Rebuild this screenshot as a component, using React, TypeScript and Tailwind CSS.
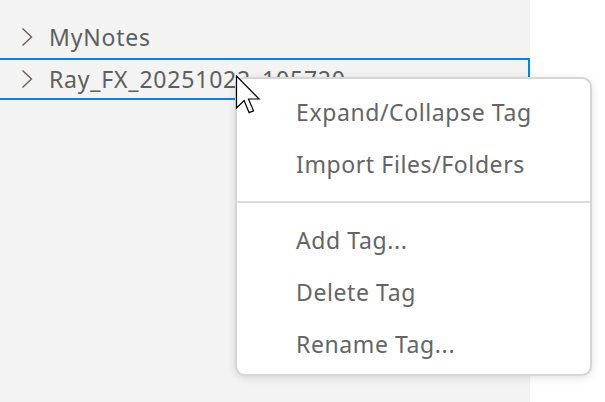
const font = { fontFamily: '"Noto Sans", "Open Sans", sans-serif' }

export default function App() {
  return (
    <div className="relative w-[605px] h-[402px] bg-white overflow-hidden" style={font}>
      {/* tree panel */}
      <div className="w-[530px] h-full bg-[#f3f3f3] pt-4">
        <TreeRow label="MyNotes" />
        <TreeRow label="Ray_FX_20251022_105720" selected />
      </div>

      {/* context menu */}
      <div className="absolute left-[235px] top-[77px] w-[357px] h-[299px] bg-white border-2 border-[#d6d6d6] rounded-[10px] shadow-[0_2px_8px_rgba(0,0,0,0.12)] pt-[7px]">
        <MenuItem label="Expand/Collapse Tag" />
        <MenuItem label="Import Files/Folders" />
        <div className="h-[2px] bg-[#dcdcdc] mt-[11px] mb-[11px]" />
        <MenuItem label="Add Tag..." />
        <MenuItem label="Delete Tag" />
        <MenuItem label="Rename Tag..." />
      </div>

      {/* mouse pointer */}
      <svg
        className="absolute left-[235px] top-[75px]"
        width="26"
        height="39"
        viewBox="0 0 12.5 19.5"
      >
        <path
          d="M0.5 0.5 L0.5 16.5 L4.3 12.8 L6.8 18.8 L9 17.9 L6.5 12 L11.8 12 Z"
          fill="white"
          stroke="black"
          strokeWidth="0.6"
          strokeLinejoin="miter"
        />
      </svg>
    </div>
  )
}

function TreeRow({ label, selected }: { label: string; selected?: boolean }) {
  return (
    <div
      className={
        selected
          ? 'h-[42px] flex items-center pl-[21px] border-2 border-l-0 border-[#0a84e0]'
          : 'h-[42px] flex items-center pl-[21px] border-2 border-l-0 border-transparent'
      }
    >
      <svg width="12" height="20" viewBox="0 0 12 20" className="shrink-0">
        <polyline
          points="1.5,1.5 10.5,10 1.5,18.5"
          fill="none"
          stroke="#6b5e57"
          strokeWidth="1.4"
        />
      </svg>
      <span className="ml-[16px] text-[23px] tracking-[0.8px] text-[#5e5e5e] whitespace-nowrap leading-none">
        {label}
      </span>
    </div>
  )
}

function MenuItem({ label }: { label: string }) {
  return (
    <div className="h-[52px] flex items-center pl-[59px] text-[23px] tracking-[0.6px] text-[#646464] leading-none">
      {label}
    </div>
  )
}
